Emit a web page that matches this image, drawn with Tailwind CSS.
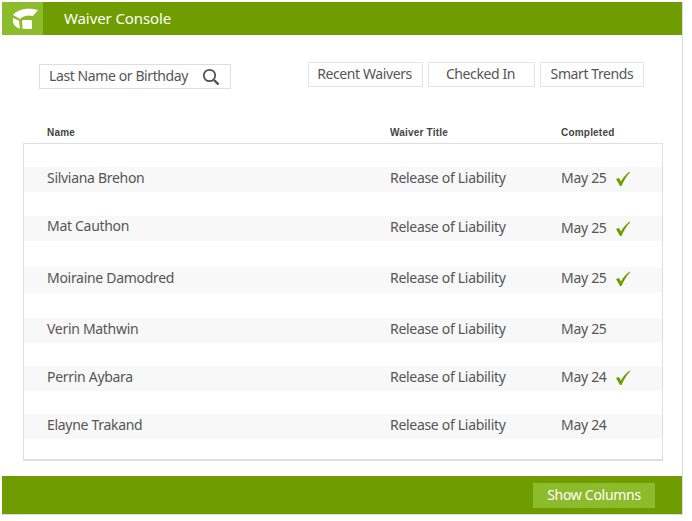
<!DOCTYPE html>
<html><head><meta charset="utf-8"><script src="https://cdn.jsdelivr.net/npm/@tailwindcss/browser@4"></script></head>
<body class="bg-white font-['Noto_Sans',sans-serif]">
<div class="w-[692px] h-[521px] bg-white pl-[2px] pt-[2px]">
<div class="w-[681px] h-[513px] border-r border-b border-[#dcdcdc] flex flex-col">
  <header class="h-[33px] bg-[#6f9c00] flex items-center shrink-0">
    <div class="w-[41px] h-full bg-[#8cbb2c] flex items-center justify-center">
      <svg class="ml-[6px]" width="27" height="21" viewBox="0 0 27 21"><path d="M1 7C5 2 14 -1 26 2L21 8C16 6.5 11 8 8 11Z" fill="#fff"/><path d="M1 10L7 12.5L8 20.5C3 20 0 15 1 10Z" fill="#fff"/><path d="M11.5 12L18.5 12C19.5 12 20 12.5 20 13.5L20 19.5C20 20.5 19.5 21 18.5 21L12 21C11 21 10.5 20.5 10.5 19.5L10 13.5C10 12.5 10.5 12 11.5 12Z" fill="#fff"/></svg>
    </div>
    <span class="ml-[21px] text-[15px] tracking-[-0.1px] text-white pb-[1px]">Waiver Console</span>
  </header>
  <div class="flex items-start justify-between pl-[37px] pr-[38px] pt-[29px] shrink-0">
    <div class="w-[192px] h-[25px] border border-[#dedede] flex items-center justify-between pl-[9px] pr-[10px] text-[14px] tracking-[-0.4px] text-[#555]">
      <span class="pb-[3px]">Last Name or Birthday</span>
      <svg width="18" height="18" viewBox="0 0 18 18" fill="none" stroke="#4a4f50"><circle cx="7.5" cy="7.5" r="5.7" stroke-width="1.7"/><path d="M12 12l4.5 4.5" stroke-width="2.4"/></svg>
    </div>
    <div class="flex gap-[5px] text-[14px] tracking-[-0.4px] text-[#555] -mt-[2px]">
      <div class="w-[115px] h-[25px] pb-[3px] pr-[2px] border border-[#e4e4e4] flex items-center justify-center">Recent Waivers</div>
      <div class="w-[107px] h-[25px] pb-[3px] pr-[2px] border border-[#e4e4e4] flex items-center justify-center">Checked In</div>
      <div class="w-[104px] h-[25px] pb-[3px] border border-[#e4e4e4] flex items-center justify-center">Smart Trends</div>
    </div>
  </div>
  <div class="grid grid-cols-[343px_171px_1fr] pl-[45px] h-[16px] mt-[35px] items-center text-[10px] font-bold text-[#444] font-['Liberation_Sans',sans-serif] tracking-[0.2px] shrink-0">
    <span>Name</span><span>Waiver Title</span><span>Completed</span>
  </div>
  <div class="mt-[3px] ml-[21px] w-[640px] h-[318px] border border-[#dfdfdf] border-b-2 shrink-0 text-[14px] tracking-[-0.3px] text-[#555]">
    <div class="mt-[23px] h-[25px] pb-[5px] bg-[#f8f8f8] grid grid-cols-[343px_171px_1fr] pl-[23px] items-center"><span>Silviana Brehon</span><span>Release of Liability</span><span class="flex items-center">May 25<svg class="ml-[9px] mt-[2px]" width="14" height="15" viewBox="0 0 14 15"><path d="M0 8L3 7L5 10.5C7 6.5 10 3 14 0.5L14 1.5C10.5 5 8 9.5 5.5 15L4 15Z" fill="#6f9c00"/></svg></span></div>
    <div class="mt-[24px] h-[25px] pt-[2px] pb-[3px] leading-[16px] bg-[#f8f8f8] grid grid-cols-[343px_171px_1fr] pl-[23px] items-center"><span class="mb-[4px]">Mat Cauthon</span><span class="mb-[2px]">Release of Liability</span><span class="flex items-center">May 25<svg class="ml-[9px]" width="14" height="15" viewBox="0 0 14 15"><path d="M0 8L3 7L5 10.5C7 6.5 10 3 14 0.5L14 1.5C10.5 5 8 9.5 5.5 15L4 15Z" fill="#6f9c00"/></svg></span></div>
    <div class="mt-[26px] h-[26px] pb-[5px] bg-[#f8f8f8] grid grid-cols-[343px_171px_1fr] pl-[23px] items-center"><span>Moiraine Damodred</span><span>Release of Liability</span><span class="flex items-center">May 25<svg class="ml-[9px] mt-[2px]" width="14" height="15" viewBox="0 0 14 15"><path d="M0 8L3 7L5 10.5C7 6.5 10 3 14 0.5L14 1.5C10.5 5 8 9.5 5.5 15L4 15Z" fill="#6f9c00"/></svg></span></div>
    <div class="mt-[25px] h-[25px] pb-[5px] bg-[#f8f8f8] grid grid-cols-[343px_171px_1fr] pl-[23px] items-center"><span>Verin Mathwin</span><span>Release of Liability</span><span>May 25</span></div>
    <div class="mt-[23px] h-[25px] pb-[5px] bg-[#f8f8f8] grid grid-cols-[343px_171px_1fr] pl-[23px] items-center"><span>Perrin Aybara</span><span>Release of Liability</span><span class="flex items-center">May 24<svg class="ml-[9px] mt-[2px]" width="14" height="15" viewBox="0 0 14 15"><path d="M0 8L3 7L5 10.5C7 6.5 10 3 14 0.5L14 1.5C10.5 5 8 9.5 5.5 15L4 15Z" fill="#6f9c00"/></svg></span></div>
    <div class="mt-[23px] h-[25px] pb-[5px] bg-[#f8f8f8] grid grid-cols-[343px_171px_1fr] pl-[23px] items-center"><span>Elayne Trakand</span><span>Release of Liability</span><span>May 24</span></div>
  </div>
  <footer class="mt-auto h-[38px] bg-[#6f9c00] flex items-center justify-end pr-[27px] shrink-0">
    <div class="w-[122px] h-[25px] pb-[2px] bg-[#8cbb2c] text-white text-[14px] tracking-[-0.3px] flex items-center justify-center">Show Columns</div>
  </footer>
</div>
</div>
</body></html>
